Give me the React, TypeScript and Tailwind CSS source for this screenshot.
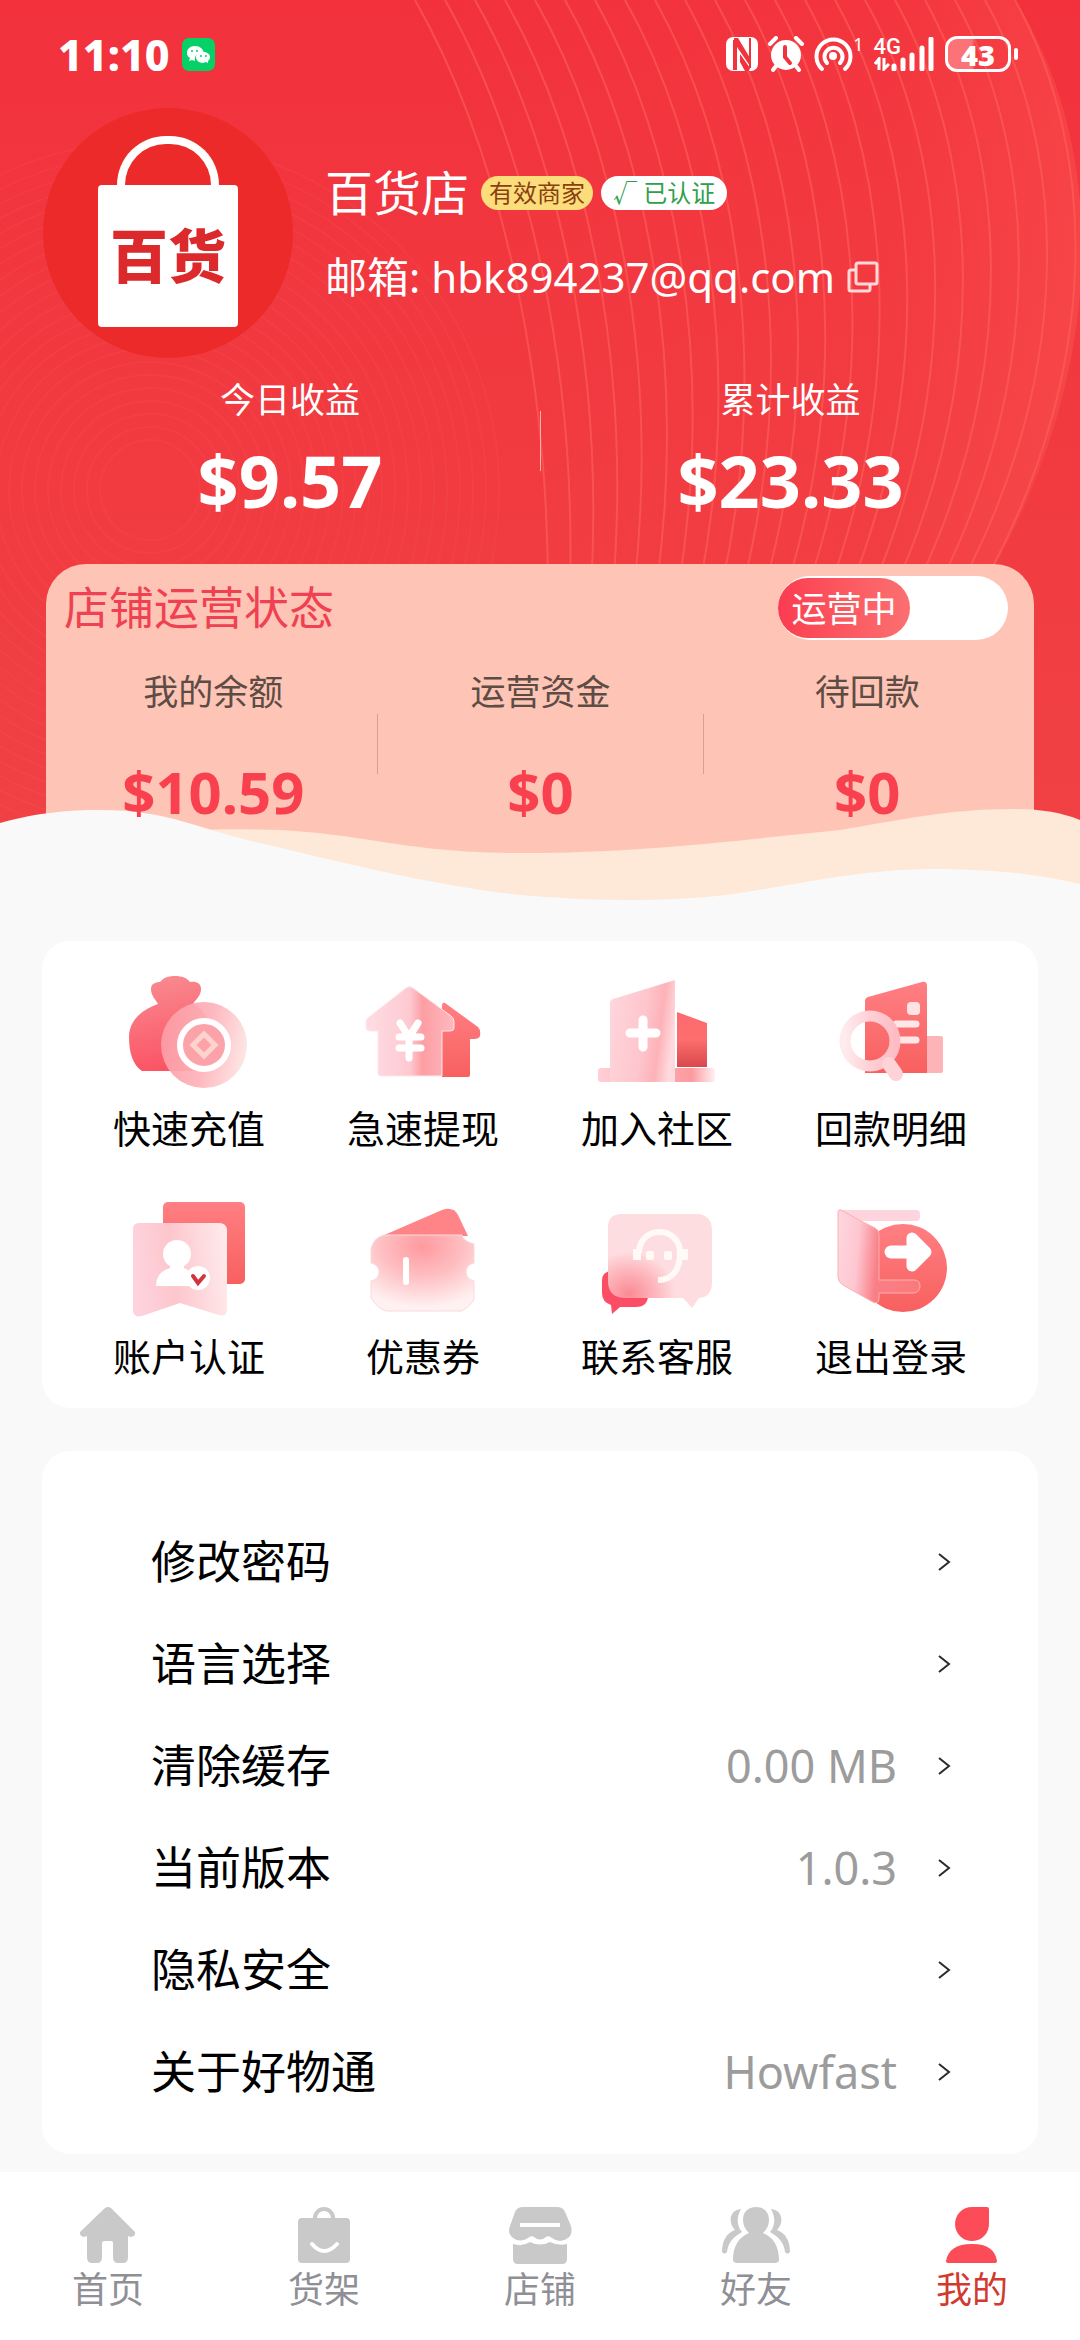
import { useState } from 'react';
import type { ReactNode } from 'react';

const earnings = [
  { title: '今日收益', value: '$9.57' },
  { title: '累计收益', value: '$23.33' },
];

const balances = [
  { title: '我的余额', value: '$10.59' },
  { title: '运营资金', value: '$0' },
  { title: '待回款', value: '$0' },
];

const settings = [
  { title: '修改密码', value: '' },
  { title: '语言选择', value: '' },
  { title: '清除缓存', value: '0.00 MB' },
  { title: '当前版本', value: '1.0.3' },
  { title: '隐私安全', value: '' },
  { title: '关于好物通', value: 'Howfast' },
];

// Gradients shared by all the shortcut icons
const IconDefs = () => (
  <svg className="absolute h-0 w-0" aria-hidden="true">
    <defs>
      <linearGradient id="coral" x1="0" y1="0" x2="0" y2="1">
        <stop offset="0" stopColor="#ff7f83" />
        <stop offset="1" stopColor="#f8605f" />
      </linearGradient>
      <linearGradient id="sack" x1="0.3" y1="0" x2="0.5" y2="1">
        <stop offset="0" stopColor="#f98b90" />
        <stop offset="1" stopColor="#fb5163" />
      </linearGradient>
      <linearGradient id="coin" x1="0" y1="0.3" x2="1" y2="0.5">
        <stop offset="0" stopColor="#fd9ba4" />
        <stop offset="0.55" stopColor="#fdb3ba" />
        <stop offset="1" stopColor="#fee3e3" />
      </linearGradient>
      <linearGradient id="house" x1="0" y1="0" x2="1" y2="0">
        <stop offset="0" stopColor="#fedde4" />
        <stop offset="0.5" stopColor="#fec9d1" />
        <stop offset="0.64" stopColor="#fd9ea4" />
        <stop offset="1" stopColor="#fdb9bf" />
      </linearGradient>
      <linearGradient id="tower" x1="0" y1="0.2" x2="1" y2="0.4">
        <stop offset="0" stopColor="#fed6dc" />
        <stop offset="0.55" stopColor="#fec5cc" />
        <stop offset="0.8" stopColor="#fdb2b8" />
        <stop offset="1" stopColor="#fed9dd" />
      </linearGradient>
      <linearGradient id="base" x1="0" y1="0" x2="1" y2="0">
        <stop offset="0" stopColor="#fed0d6" />
        <stop offset="0.55" stopColor="#fda9b0" />
        <stop offset="0.8" stopColor="#fb9a9f" />
        <stop offset="1" stopColor="#fff1f2" />
      </linearGradient>
      <linearGradient id="brick" x1="0" y1="0" x2="0" y2="1">
        <stop offset="0" stopColor="#fb6a70" />
        <stop offset="0.5" stopColor="#fd6e6e" />
        <stop offset="1" stopColor="#d8484d" />
      </linearGradient>
      <linearGradient id="lens" x1="0" y1="0" x2="1" y2="0">
        <stop offset="0" stopColor="#ffeaed" />
        <stop offset="0.5" stopColor="#fed0d6" />
        <stop offset="1" stopColor="#fdbcc3" />
      </linearGradient>
      <linearGradient id="ribbon" x1="0" y1="0.3" x2="1" y2="0.2">
        <stop offset="0" stopColor="#fed3dd" />
        <stop offset="0.4" stopColor="#fdc6cd" />
        <stop offset="1" stopColor="#feebeb" />
      </linearGradient>
      <radialGradient id="ticket" cx="0.5" cy="0.15" r="0.8">
        <stop offset="0" stopColor="#fe9a9f" />
        <stop offset="0.5" stopColor="#febfc2" />
        <stop offset="1" stopColor="#fff0f1" />
      </radialGradient>
      <radialGradient id="bubble" cx="0.2" cy="0.85" r="0.45">
        <stop offset="0" stopColor="#fb8a94" />
        <stop offset="0.6" stopColor="#fdb9bf" />
        <stop offset="1" stopColor="#fedde1" />
      </radialGradient>
      <linearGradient id="door" x1="0" y1="0.3" x2="1" y2="0.4">
        <stop offset="0" stopColor="#fed5df" />
        <stop offset="0.25" stopColor="#fec6d0" />
        <stop offset="0.5" stopColor="#f97f86" />
        <stop offset="1" stopColor="#fa7a7c" />
      </linearGradient>
    </defs>
  </svg>
);

const shortcuts: { title: string; icon: ReactNode }[] = [
  {
    title: '快速充值',
    icon: (
      <>
        <path
          d="M34 34c-2-4-7-8-7-15 0-5 4-7 9-7 3-4 8-6 15-6s12 2 15 6c6-1 11 1 11 7 0 7-5 10-8 15 12 6 20 20 20 36 0 14-5 24-11 31H18C9 95 5 83 5 67c0-16 12-27 29-33z"
          fill="url(#sack)"
        />
        <circle cx="80" cy="75" r="43" fill="url(#coin)" opacity="0.93" />
        <circle cx="80" cy="75" r="24" fill="#fca3aa" stroke="#fff" strokeWidth="6" />
        <path d="M80 64l11 11-11 11-11-11z" fill="none" stroke="#fdd3ce" strokeWidth="5" />
      </>
    ),
  },
  {
    title: '急速提现',
    icon: (
      <>
        <path
          d="M87 33l33 24q3 3 2 9-1 3-6 3h-4v36q0 2-3 2H84V36q0-4 3-3z"
          fill="url(#coral)"
        />
        <path
          d="M48 18q4-3 7 0l38 28q3 2 3 6v6q0 3-4 3h-8v45H23q-3 0-3-3V61h-8q-4 0-4-4v-5q0-3 3-5z"
          fill="url(#house)"
          stroke="#ffe6e9"
          strokeWidth="1"
        />
        <path
          d="M42 53l9 14 9-14M41 67h22M41 78h22M51 67v21"
          fill="none"
          stroke="#fff"
          strokeWidth="7"
          strokeLinecap="round"
          strokeLinejoin="round"
        />
      </>
    ),
  },
  {
    title: '加入社区',
    icon: (
      <>
        <rect x="6" y="98" width="117" height="14" rx="3" fill="url(#base)" />
        <path d="M85 42l30 11v44H85z" fill="url(#brick)" />
        <path d="M18 33q0-3 3-4l62-19v102H18z" fill="url(#tower)" />
        <path
          d="M51 50v27M38 63h26"
          stroke="#fff"
          strokeWidth="9"
          strokeLinecap="round"
          strokeLinejoin="round"
        />
      </>
    ),
  },
  {
    title: '回款明细',
    icon: (
      <>
        <rect x="99" y="66" width="18" height="37" rx="2" fill="#fcb4b8" />
        <path d="M39 31q0-3 3-4l54-15q5-1 5 4v87H39z" fill="url(#coral)" />
        <rect x="81" y="32" width="13" height="13" rx="4" fill="#ffe3e3" />
        <path d="M70 54h20M74 70h16" stroke="#ffe7e7" strokeWidth="7" strokeLinecap="round" />
        <circle cx="44" cy="71" r="25" fill="none" stroke="url(#lens)" strokeWidth="11" />
        <path d="M63 94l7 10" stroke="#fed3d8" strokeWidth="14" strokeLinecap="round" />
      </>
    ),
  },
  {
    title: '账户认证',
    icon: (
      <>
        <rect x="39" y="4" width="82" height="82" rx="5" fill="url(#coral)" />
        <path
          d="M15 25h80q8 0 8 8v79q0 7-8 5l-39-12-38 13q-9 2-9-6V31q0-6 6-6z"
          fill="url(#ribbon)"
        />
        <circle cx="53" cy="56" r="14" fill="#fff" />
        <path d="M46 66h14v4q7 3 7 8v10H32q0-14 14-18z" fill="#fff" />
        <circle cx="74" cy="80" r="12" fill="#fff" />
        <path
          d="M69 78l5 7 6-7"
          fill="none"
          stroke="#d1363f"
          strokeWidth="4"
          strokeLinecap="round"
        />
      </>
    ),
  },
  {
    title: '优惠券',
    icon: (
      <>
        <path d="M24 38l60-26q11-4 16 5l10 21z" fill="#fe8488" />
        <path
          d="M26 37h78q1 6 12 9v19q-8 2-8 9t8 9v17q0 5-12 13H28q-9-3-15-13V83q8-2 8-9t-8-9V51q2-11 13-14z"
          fill="url(#ticket)"
          stroke="#fbd9dc"
          strokeWidth="1"
        />
        <path d="M48 62v22" stroke="#fff" strokeWidth="6" strokeLinecap="round" />
      </>
    ),
  },
  {
    title: '联系客服',
    icon: (
      <>
        <path
          d="M20 73h26q10 0 10 10v14q0 12-12 12H28l-8 7-1-9q-9-3-9-12V83q0-10 10-10z"
          fill="#fb4d63"
        />
        <path
          d="M28 16h80q12 3 12 16v52q0 15-13 16l-7 10-9-10H32q-16-1-16-17V29q0-12 12-13z"
          fill="url(#bubble)"
        />
        <path
          d="M47 55c0-28 41-28 41 0 0 17-8 27-22 27"
          fill="none"
          stroke="#fffaf5"
          strokeWidth="6"
        />
        <path d="M41 51h8v11h-8zM87 51h9v11h-9z" fill="#fffaf5" />
        <rect x="54" y="53" width="8" height="9" rx="2" fill="#fffaf5" />
        <rect x="72" y="53" width="8" height="9" rx="2" fill="#fffaf5" />
      </>
    ),
  },
  {
    title: '退出登录',
    icon: (
      <>
        <rect x="12" y="12" width="82" height="11" rx="4" fill="#fed5df" />
        <circle cx="77" cy="70" r="44" fill="url(#coral)" />
        <path
          d="M15 12l20 11 14 7q4 2 4 6v46h35q6 0 6 6t-6 7H53v5q0 8-8 3L17 87q-5-3-5-8V15q0-4 3-3z"
          fill="url(#door)"
          stroke="#fdb0b0"
          strokeWidth="1"
        />
        <path d="M65 54h22" stroke="#fff" strokeWidth="13" strokeLinecap="round" />
        <path
          d="M86 40v28l14-14z"
          fill="#fff"
          stroke="#fff"
          strokeWidth="11"
          strokeLinejoin="round"
        />
      </>
    ),
  },
];

const tabs: { title: string; active?: boolean; icon: ReactNode }[] = [
  {
    title: '首页',
    icon: (
      <path
        d="M31 2q3-2 6 0l24 24q1 4-4 5l-3-1v21q0 6-5 6h-5q-5 0-5-6V37q0-2-2-2h-6q-3 0-3 2v14q0 6-5 6h-5q-5 0-5-6V30l-3 1q-5-1-4-5z"
        fill="#c9c9c9"
      />
    ),
  },
  {
    title: '货架',
    icon: (
      <>
        <path d="M25 14v-2a9 9 0 0118 0v2" fill="none" stroke="#c9c9c9" strokeWidth="4" />
        <rect x="8" y="12" width="52" height="45" rx="4" fill="#c9c9c9" />
        <path
          d="M22 38q12 14 25 0"
          fill="none"
          stroke="#fff"
          strokeWidth="4"
          strokeLinecap="round"
        />
      </>
    ),
  },
  {
    title: '店铺',
    icon: (
      <>
        <path
          d="M17 1h34q6 0 8 5l6 14q2 8-3 12-8 6-16 0-3-3-6-1-6 5-12 0-3-2-6 1-8 5-15 0-6-5-3-12L9 6q2-5 8-5z"
          fill="#c9c9c9"
        />
        <path d="M14 19h40" stroke="#fff" strokeWidth="4" />
        <path
          d="M7 38q9 3 17-2 10 5 20 0 8 4 17 2v15q0 5-5 5H12q-5 0-5-5z"
          fill="#c9c9c9"
        />
      </>
    ),
  },
  {
    title: '好友',
    icon: (
      <>
        <path
          d="M19 3C7 4 6 17 13 24 5 27 0 34 0 46q3 3 5 0c1-9 6-15 15-20-5-6-6-14-1-23zM49 3c12 1 13 14 6 21 8 3 13 10 13 22q-3 3-5 0c-1-9-6-15-15-20 5-6 6-14 1-23z"
          fill="#c9c9c9"
        />
        <path
          d="M34 1c8 0 13 5 13 13 0 5-2 9-6 13 10 4 16 13 16 27q0 3-5 3H16q-5 0-5-3c0-14 6-23 16-27-4-4-6-8-6-13C21 6 26 1 34 1z"
          fill="#c9c9c9"
        />
      </>
    ),
  },
  {
    title: '我的',
    active: true,
    icon: (
      <>
        <path d="M34 1h15q2 0 2 2v14A17 17 0 1134 1z" fill="#fb4c57" />
        <path d="M8 55c2-11 10-17 26-17s23 6 25 17q0 2-3 2H11q-3 0-3-2z" fill="#fb4c57" />
      </>
    ),
  },
];

const RAYS = 21;

const HeaderPattern = () => (
  <svg
    className="absolute inset-0 h-full w-full"
    viewBox="0 0 1080 900"
    preserveAspectRatio="none"
    aria-hidden="true"
  >
    <defs>
      <linearGradient id="glow" x1="0" y1="0" x2="1" y2="0">
        <stop offset="0" stopColor="#ff5a55" stopOpacity="0" />
        <stop offset="0.7" stopColor="#ff5a55" stopOpacity="0.08" />
        <stop offset="1" stopColor="#ff5a55" stopOpacity="0.4" />
      </linearGradient>
    </defs>
    <path
      d="M415 0C500 150 548 350 548 600H975C1110 380 1110 150 1015 0z"
      fill="url(#glow)"
    />
    {Array.from({ length: RAYS }, (_, i) => {
      const t = i / (RAYS - 1);
      const mix = (a: number, b: number) => Math.round(a + (b - a) * t);
      return (
        <path
          key={i}
          d={`M${mix(415, 1015)} 0C${mix(500, 1098)} 150 ${mix(548, 1104)} 370 ${mix(548, 980)} 590`}
          fill="none"
          stroke="#ff6058"
          strokeOpacity="0.6"
          strokeWidth="2"
        />
      );
    })}
    {Array.from({ length: 24 }, (_, i) => (
      <circle
        key={i}
        cx="150"
        cy="490"
        r={50 + i * 13}
        fill="none"
        stroke="#ff6a60"
        strokeOpacity="0.12"
        strokeWidth="2"
      />
    ))}
  </svg>
);

const HeaderWave = () => (
  <svg
    className="absolute bottom-0 left-0 z-10 h-[100px] w-full"
    viewBox="0 800 1080 100"
    preserveAspectRatio="none"
    aria-hidden="true"
  >
    <path
      d="M150 835C200 828 230 829 280 830C370 835 410 853 520 853C640 853 740 840 840 830C900 820 950 809 1010 809C1040 809 1060 812 1080 820V900H150z"
      fill="#fee8d7"
    />
    <path
      d="M0 823C40 812 70 810 100 810C170 810 200 830 260 843C340 862 430 885 520 895C600 902 680 902 740 893C810 882 860 870 930 869C1000 869 1040 875 1080 884V901H0z"
      fill="#f9f9f9"
    />
  </svg>
);

const StatusBar = () => (
  <div className="flex h-[108px] items-center justify-between pr-[62px] pl-[58px] text-white">
    <div className="flex items-center gap-3">
      <span className="text-[43px] leading-none font-extrabold">11:10</span>
      <svg width="33" height="33" viewBox="0 0 33 33" aria-label="WeChat">
        <rect width="33" height="33" rx="7" fill="#06d167" />
        <path
          d="M13 8c-5 0-8 3-8 7 0 2 1 4 3 5l-1 3 3-1 3 1c-1-5 3-9 9-8-1-4-4-7-9-7z"
          fill="#fff"
        />
        <path
          d="M21 14c-4 0-7 2-7 5s3 6 7 6l3-1 2 1v-2c1-1 2-2 2-4 0-3-3-5-7-5z"
          fill="#fff"
        />
        <circle cx="10" cy="13" r="1" fill="#06d167" />
        <circle cx="15" cy="13" r="1" fill="#06d167" />
        <circle cx="19" cy="18" r="1" fill="#06d167" />
        <circle cx="24" cy="18" r="1" fill="#06d167" />
      </svg>
    </div>
    <div className="flex items-center gap-[10px]">
      <svg width="32" height="34" viewBox="0 0 32 34" aria-label="NFC">
        <rect width="32" height="34" rx="7" fill="#fff" />
        <path d="M8 33V3M24 1v30" stroke="#f1333e" strokeWidth="2" />
        <path d="M8 1h4l12 20v8L11 10v23H8zM14 17l10 14-1 3h-4l-5-9z" fill="#f1333e" />
      </svg>
      <svg width="36" height="36" viewBox="0 0 36 36" aria-label="Alarm">
        <circle cx="18" cy="19" r="15" fill="#fff" />
        <path
          d="M2 8l6-6M34 8l-6-6M8 30l-3 4M28 30l3 4"
          stroke="#fff"
          strokeWidth="4"
          strokeLinecap="round"
        />
        <path
          d="M17 11v10l5 6"
          fill="none"
          stroke="#f1333e"
          strokeWidth="4"
          strokeLinecap="round"
        />
      </svg>
      <div className="flex items-start">
        <svg width="39" height="36" viewBox="0 0 39 36" aria-label="Hotspot">
          <g fill="none" stroke="#fff" strokeWidth="4" strokeLinecap="round">
            <path d="M8 33a17 17 0 1123 0" />
            <path d="M13 27a9 9 0 1113 0" />
          </g>
          <circle cx="19" cy="20" r="4" fill="#fff" />
        </svg>
        <span className="text-lg leading-4">1</span>
      </div>
      <div className="flex items-end">
        <div className="flex flex-col items-start">
          <span className="font-[Roboto] text-[22px] leading-5 font-medium">4G</span>
          <svg width="16" height="14" viewBox="0 0 16 14" aria-hidden="true">
            <path d="M1 7l4-5v11M10 1v11l5-5" fill="none" stroke="#fff" strokeWidth="3" />
          </svg>
        </div>
        <svg className="-ml-3" width="46" height="34" viewBox="0 0 46 34" aria-label="Signal">
          <path
            d="M5 32v-3M14 32V23M23 32V18M33 32V11M42 32V2"
            stroke="#fff"
            strokeWidth="5"
            strokeLinecap="round"
          />
        </svg>
      </div>
      <div className="flex items-center gap-[3px]">
        <span className="flex h-9 w-[66px] items-center justify-center rounded-xl border-3 border-white bg-[linear-gradient(90deg,#fb7277_40%,transparent_45%)] text-[29px] leading-none font-black">
          43
        </span>
        <span className="h-3 w-1 rounded-sm bg-white" />
      </div>
    </div>
  </div>
);

const Profile = () => (
  <div className="flex items-center gap-8 px-[43px] text-white">
    <div className="flex h-[250px] w-[250px] shrink-0 flex-col items-center rounded-full bg-[#ed2a2a] pt-7">
      <div className="h-[49px] w-[102px] rounded-t-full border-8 border-b-0 border-white" />
      <div className="flex h-[142px] w-[140px] items-center justify-center rounded-sm bg-white text-[58px] leading-none font-black text-[#dc2a2c]">
        百货
      </div>
    </div>
    <div className="pt-1">
      <div className="flex items-center">
        <h1 className="text-5xl leading-[84px]">百货店</h1>
        <span className="ml-3 rounded-full bg-[#fbdd7b] px-2 text-2xl leading-[34px] text-[#8a3f12]">
          有效商家
        </span>
        <span className="ml-2 rounded-full bg-white px-3 text-2xl leading-[34px] text-[#2fa04d]">
          √ 已认证
        </span>
      </div>
      <div className="flex items-center gap-3 text-[42px] leading-[84px]">
        <span>邮箱: hbk894237@qq.com</span>
        <button type="button" aria-label="复制邮箱">
          <svg
            width="32"
            height="32"
            viewBox="0 0 32 32"
            fill="none"
            stroke="#ffd9da"
            strokeWidth="3"
          >
            <rect x="9" y="2" width="21" height="21" rx="2" />
            <path d="M8 9H4q-2 0-2 2v17q0 2 2 2h17q2 0 2-2v-4" />
          </svg>
        </button>
      </div>
    </div>
  </div>
);

// The wave covers the foot of the card, the text stays above the wave
const ShopStatus = () => {
  const [running, setRunning] = useState(true);

  return (
    <section className="relative mx-[46px] rounded-t-[40px] bg-[#fec4b5] pt-3 pb-9">
      <div className="relative z-20">
        <div className="flex items-center justify-between pr-[26px] pl-[18px]">
          <h2 className="text-[45px] leading-[64px] text-[#f04152]">店铺运营状态</h2>
          <label className="flex h-16 w-[230px] cursor-pointer items-center rounded-full bg-white">
            <input
              type="checkbox"
              role="switch"
              className="sr-only"
              checked={running}
              onChange={() => setRunning(!running)}
            />
            <span className="flex h-[60px] w-[132px] items-center justify-center rounded-full bg-linear-to-r from-[#fb3b50] to-[#fb6f70] text-[35px] leading-none text-white">
              运营中
            </span>
          </label>
        </div>
        <dl className="mt-7 flex items-center px-1 text-center">
          {balances.map(({ title, value }, i) => (
            <div key={title} className="flex flex-1 items-center">
              {i > 0 && <span className="mb-1 h-[60px] w-px bg-[#d6a094]" />}
              <div className="flex-1">
                <dt className="text-[35px] leading-[48px] text-[#5d4c44]">{title}</dt>
                <dd className="mt-11 text-[58px] leading-[64px] font-bold text-[#f9404f]">
                  {value}
                </dd>
              </div>
            </div>
          ))}
        </dl>
      </div>
    </section>
  );
};

const Header = () => (
  <header className="relative bg-linear-to-b from-[#f2313c] to-[#f04245] pb-10">
    <HeaderPattern />
    <div className="relative">
      <StatusBar />
      <Profile />
      <dl className="flex items-center px-10 pt-[18px] pb-[42px] text-center text-white">
        {earnings.map(({ title, value }, i) => (
          <div key={title} className="flex flex-1 items-center">
            {i > 0 && <span className="mb-4 h-[60px] w-px bg-[#fbb0a8]" />}
            <div className="flex-1">
              <dt className="text-[35px] leading-[48px]">{title}</dt>
              <dd className="mt-[14px] text-7xl leading-[84px] font-bold">{value}</dd>
            </div>
          </div>
        ))}
      </dl>
    </div>
    <ShopStatus />
    <HeaderWave />
  </header>
);

const Shortcuts = () => (
  <section className="mx-[42px] mt-[41px] grid grid-cols-4 gap-y-11 rounded-[28px] bg-white px-[30px] pt-[29px] pb-[26px]">
    {shortcuts.map(({ title, icon }) => (
      <button key={title} type="button" className="flex flex-col items-center">
        <svg width="130" height="120" viewBox="0 0 130 120" aria-hidden="true">
          {icon}
        </svg>
        <span className="mt-3 text-[38px] leading-[52px] text-black">{title}</span>
      </button>
    ))}
  </section>
);

const Settings = () => (
  <ul className="mx-[42px] mt-[43px] rounded-[28px] bg-white pt-[60px] pb-[31px] text-[45px]">
    {settings.map(({ title, value }) => (
      <li key={title}>
        <button type="button" className="flex h-[102px] w-full items-center pr-[87px] pl-[109px]">
          <span className="text-black">{title}</span>
          <span className="mr-10 ml-auto text-[#9c9c9c]">{value}</span>
          <svg width="14" height="20" viewBox="0 0 14 20" aria-hidden="true">
            <path d="M2 2l10 8-10 8" fill="none" stroke="#2b2b2b" strokeWidth="2" />
          </svg>
        </button>
      </li>
    ))}
  </ul>
);

const TabBar = () => (
  <nav className="mt-[18px] flex bg-white pt-[34px] pb-6">
    {tabs.map(({ title, active, icon }) => (
      <a key={title} href="#" className="flex flex-1 flex-col items-center">
        <svg width="68" height="58" viewBox="0 0 68 58" aria-hidden="true">
          {icon}
        </svg>
        <span
          className={`text-4xl leading-[52px] ${active ? 'text-[#d2392f]' : 'text-[#8f8f96]'}`}
        >
          {title}
        </span>
      </a>
    ))}
  </nav>
);

export default function App() {
  return (
    <div
      lang="zh-CN"
      className="min-h-screen bg-[#f9f9f9] font-['Noto_Sans','Noto_Sans_CJK_SC',sans-serif]"
    >
      <IconDefs />
      <Header />
      <Shortcuts />
      <Settings />
      <TabBar />
    </div>
  );
}
